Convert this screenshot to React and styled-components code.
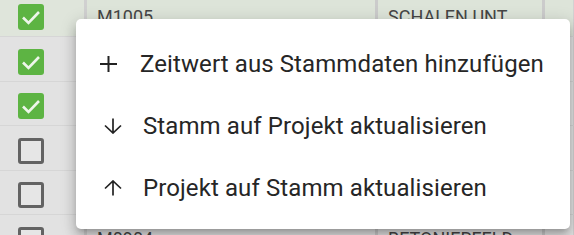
import React from "react";
import styled, { createGlobalStyle } from "styled-components";

const GlobalStyle = createGlobalStyle`
  html, body {
    margin: 0;
    padding: 0;
    background: #e4e4e4;
    overflow: hidden;
  }
  body {
    font-family: Roboto, "Liberation Sans", sans-serif;
  }
`;

const Screen = styled.div`
  position: relative;
  width: 574px;
  height: 235px;
  overflow: hidden;
`;

const Table = styled.div`
  margin-top: -7.5px;
  display: flex;
  flex-direction: column;
`;

const Row = styled.div`
  display: grid;
  grid-template-columns: 87px 291px 167px 1fr;
  height: 44.5px;
  border-bottom: 1px solid #d6d6d6;
  box-sizing: border-box;
  background: ${p => (p.selected ? "#dde4d9" : "#e4e4e4")};
`;

const Cell = styled.div`
  display: flex;
  align-items: center;
  padding: 4px 10px 0;
  border-right: ${p => (p.wide ? "3px solid #cbcbcb" : "1px solid #d2d2d2")};
  color: #454545;
  font-size: 18px;
  text-transform: uppercase;
  white-space: nowrap;
  overflow: hidden;
`;

const CheckCell = styled.div`
  display: flex;
  align-items: center;
  padding: 6px 0 0 18px;
  border-right: 3px solid #d0d0d0;
  background: ${p => (p.selected ? "#dfe5db" : "#e2e2e2")};
`;

const Box = styled.div`
  width: 26px;
  height: 26px;
  box-sizing: border-box;
  border-radius: 3px;
  display: flex;
  align-items: center;
  justify-content: center;
  background: ${p => (p.checked ? "#5db443" : "#e6e6e6")};
  border: ${p => (p.checked ? "none" : "3px solid #636363")};
`;

const Menu = styled.div`
  position: absolute;
  left: 76px;
  top: 19px;
  width: 494px;
  height: 210px;
  box-sizing: border-box;
  padding: 14px 0 10px;
  background: #fff;
  border-radius: 5px;
  box-shadow: 0 5px 6px -3px rgba(0, 0, 0, 0.2), 0 8px 12px 1px rgba(0, 0, 0, 0.14),
    0 3px 16px 2px rgba(0, 0, 0, 0.12);
`;

const Item = styled.div`
  display: flex;
  align-items: center;
  height: 62px;
  padding-left: ${p => p.indent}px;
  color: #262626;
  font-size: 24px;
  letter-spacing: 0.1px;
`;

const IconSlot = styled.span`
  display: flex;
  width: ${p => p.w}px;
  flex-shrink: 0;
`;

const Check = () => (
  <svg width="20" height="16" viewBox="0 0 20 16">
    <path d="M2 8.5l5.5 5.5L18 3" fill="none" stroke="#eef6ea" strokeWidth="2.6" />
  </svg>
);

const Plus = () => (
  <svg width="19" height="18" viewBox="0 0 19 18">
    <path d="M9.5 1v16M1 9h17" stroke="#222" strokeWidth="2" fill="none" />
  </svg>
);

const Arrow = ({ up }) => (
  <svg
    width="18"
    height="16"
    viewBox="0 0 18 16"
    style={up ? { transform: "scaleY(-1)" } : undefined}
  >
    <path
      d="M9 0.5v14.5M1 7.5l8 7.5 8-7.5"
      stroke="#222"
      strokeWidth="1.7"
      fill="none"
    />
  </svg>
);

const rows = [
  { checked: true, code: "M1005", name: "Schalen unt", selected: true },
  { checked: true },
  { checked: true },
  { checked: false },
  { checked: false },
  { checked: false, code: "M0904", name: "Betonierfeld" },
];

export default function App() {
  return (
    <Screen>
      <GlobalStyle />
      <Table>
        {rows.map((r, i) => (
          <Row key={i} selected={r.selected}>
            <CheckCell selected={r.selected}>
              <Box checked={r.checked}>{r.checked && <Check />}</Box>
            </CheckCell>
            <Cell wide>{r.code}</Cell>
            <Cell wide>{r.name}</Cell>
            <Cell />
          </Row>
        ))}
      </Table>
      <Menu>
        <Item indent={23}>
          <IconSlot w={41}>
            <Plus />
          </IconSlot>
          Zeitwert aus Stammdaten hinzufügen
        </Item>
        <Item indent={28}>
          <IconSlot w={39}>
            <Arrow />
          </IconSlot>
          Stamm auf Projekt aktualisieren
        </Item>
        <Item indent={28}>
          <IconSlot w={39}>
            <Arrow up />
          </IconSlot>
          Projekt auf Stamm aktualisieren
        </Item>
      </Menu>
    </Screen>
  );
}
